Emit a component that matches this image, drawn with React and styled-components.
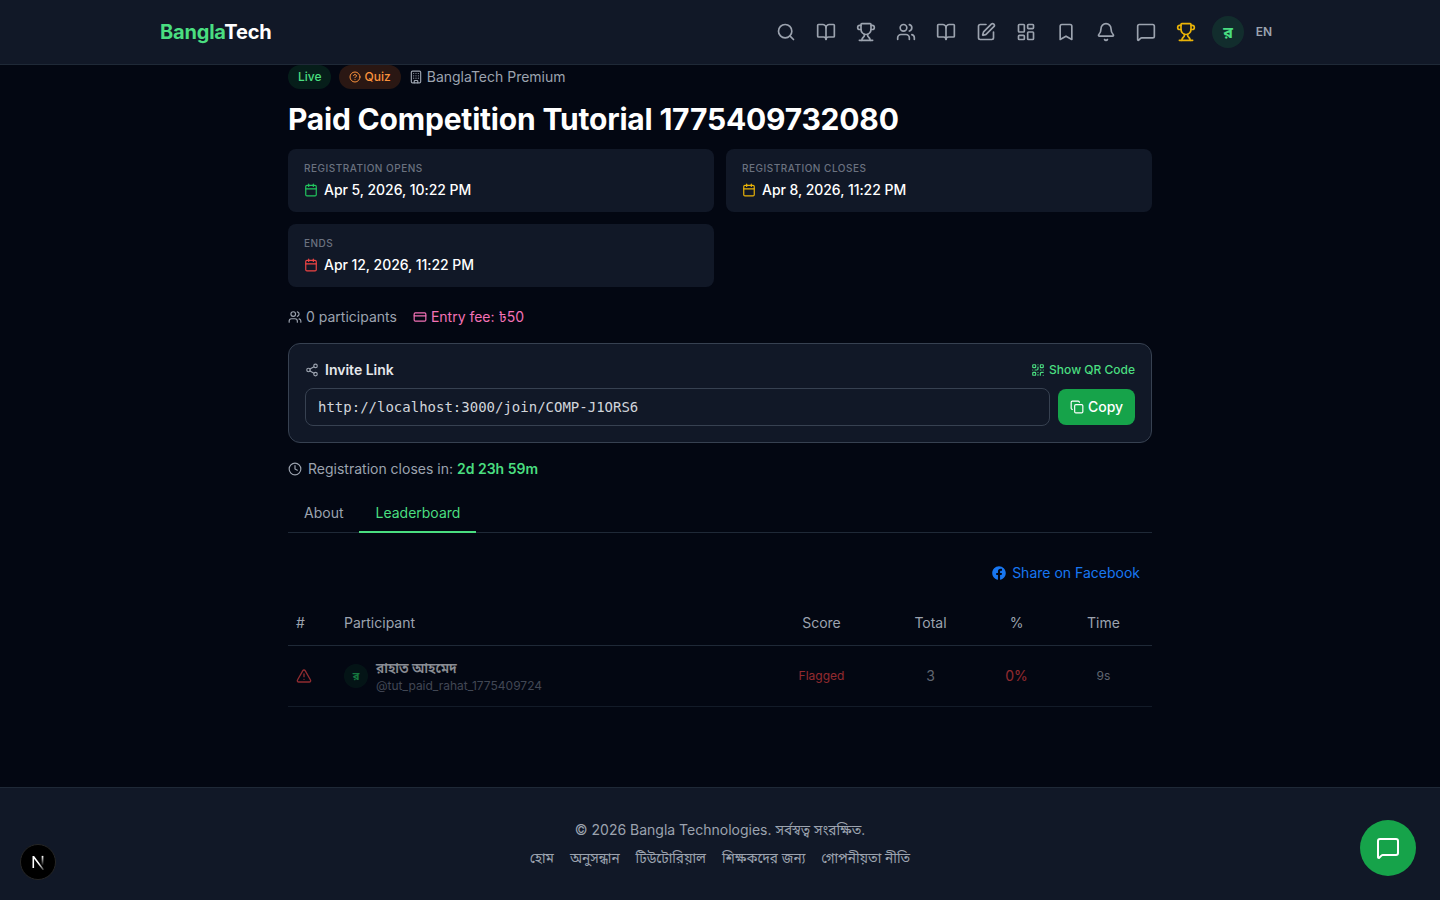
import React from "react";
import styled, { createGlobalStyle } from "styled-components";
import {
  Search, BookOpen, Trophy, Users, SquarePen, LayoutDashboard, Bookmark, Bell, MessageSquare,
  CircleHelp, Building, Calendar, CreditCard, Share2, QrCode, Copy, Clock, TriangleAlert,
} from "lucide-react";
import { FaFacebook } from "react-icons/fa";

const SANS = `Inter, "Noto Sans", "Noto Sans Bengali", sans-serif`;

const Global = createGlobalStyle`
  * { box-sizing: border-box; }
  html, body { margin: 0; padding: 0; background: #030712; }
  body {
    font-family: ${SANS};
    color: #f3f4f6;
    font-size: 14px;
    line-height: 20px;
    -webkit-font-smoothing: antialiased;
  }
`;

const Page = styled.div`
  min-height: 900px;
  display: flex;
  flex-direction: column;
  background: #030712;
`;

const Nav = styled.header`
  height: 65px;
  background: #111827;
  border-bottom: 1px solid #1f2937;
  display: flex;
  justify-content: center;
`;
const NavInner = styled.div`
  width: 1120px;
  display: flex;
  align-items: center;
  justify-content: space-between;
`;
const Logo = styled.div`
  font-size: 20px;
  line-height: 28px;
  font-weight: 700;
  letter-spacing: -0.2px;
  color: #fff;
  span { color: #4ade80; }
`;
const NavIcons = styled.nav`
  display: flex;
  align-items: center;
`;
const NavIcon = styled.div`
  width: 40px;
  height: 40px;
  display: flex;
  align-items: center;
  justify-content: center;
  color: ${(p) => p.$color || "#9ca3af"};
`;
const NavAvatar = styled.div`
  width: 32px;
  height: 32px;
  margin-left: 6px;
  border-radius: 50%;
  background: rgba(34, 197, 94, 0.12);
  color: #4ade80;
  font-size: 16px;
  font-weight: 700;
  display: flex;
  align-items: center;
  justify-content: center;
`;
const Lang = styled.div`
  width: 32px;
  margin-left: 4px;
  text-align: center;
  color: #9ca3af;
  font-size: 12px;
  font-weight: 600;
`;

const Main = styled.main`
  width: 864px;
  margin: 0 auto;
  flex: 1;
  display: flex;
  flex-direction: column;
`;
const BadgeRow = styled.div`
  display: flex;
  align-items: center;
  gap: 8px;
  height: 24px;
`;
const Pill = styled.span`
  display: inline-flex;
  align-items: center;
  gap: 4px;
  height: 24px;
  padding: 0 ${(p) => p.$right || 10}px 0 10px;
  border-radius: 999px;
  font-size: 12px;
  line-height: 16px;
  font-weight: 500;
  color: ${(p) => p.$color};
  background: ${(p) => p.$bg};
`;
const Org = styled.span`
  display: inline-flex;
  align-items: center;
  gap: 4px;
  color: #9ca3af;
`;
const Title = styled.h1`
  margin: 12px 0;
  font-size: 30px;
  line-height: 36px;
  font-weight: 700;
  letter-spacing: -0.2px;
  color: #fff;
`;
const DateGrid = styled.div`
  display: grid;
  grid-template-columns: 1fr 1fr;
  gap: 12px;
`;
const DateCard = styled.div`
  height: 63px;
  padding: 12px 16px;
  background: #111827;
  border-radius: 8px;
`;
const DateLabel = styled.div`
  font-size: 10px;
  line-height: 15px;
  font-weight: 500;
  letter-spacing: 0.5px;
  text-transform: uppercase;
  color: #6b7280;
  margin-bottom: 4px;
`;
const DateValue = styled.div`
  display: flex;
  align-items: center;
  gap: 6px;
  font-weight: 500;
  letter-spacing: -0.05px;
  color: #fff;
  svg { color: ${(p) => p.$color}; }
`;
const Meta = styled.div`
  display: flex;
  align-items: center;
  gap: 16px;
  margin: 20px 0 16px;
`;
const MetaItem = styled.span`
  display: inline-flex;
  align-items: center;
  gap: 4px;
  color: ${(p) => p.$color || "#9ca3af"};
`;
const Invite = styled.section`
  height: 100px;
  padding: 16px;
  background: #111827;
  border: 1px solid #374151;
  border-radius: 12px;
`;
const InviteHead = styled.div`
  display: flex;
  justify-content: space-between;
  align-items: center;
  height: 20px;
  margin-bottom: 8px;
`;
const InviteTitle = styled.div`
  display: flex;
  align-items: center;
  gap: 6px;
  font-weight: 600;
  color: #e5e7eb;
  svg { color: #9ca3af; }
`;
const QrLink = styled.div`
  display: flex;
  align-items: center;
  gap: 4px;
  font-size: 12px;
  font-weight: 500;
  color: #4ade80;
`;
const InviteRow = styled.div`
  display: flex;
  align-items: center;
  gap: 8px;
`;
const LinkField = styled.div`
  flex: 1;
  height: 38px;
  display: flex;
  align-items: center;
  padding: 0 12px;
  border: 1px solid #374151;
  border-radius: 8px;
  background: #111827;
  color: #d1d5db;
  font-family: "DejaVu Sans Mono", monospace;
  font-size: 14px;
`;
const CopyButton = styled.div`
  width: 77px;
  height: 36px;
  border-radius: 8px;
  background: #16a34a;
  color: #fff;
  font-weight: 500;
  display: flex;
  align-items: center;
  justify-content: center;
  gap: 4px;
`;
const Countdown = styled.div`
  display: flex;
  align-items: center;
  gap: 6px;
  margin-top: 16px;
  color: #9ca3af;
  b { font-weight: 600; color: #4ade80; }
`;
const Tabs = styled.div`
  display: flex;
  margin-top: 14px;
  border-bottom: 1px solid #1f2937;
`;
const Tab = styled.div`
  height: 40px;
  padding: 2px 16px 0;
  display: flex;
  align-items: center;
  font-weight: 400;
  margin-bottom: -1px;
  color: ${(p) => (p.$active ? "#4ade80" : "#9ca3af")};
  border-bottom: 2px solid ${(p) => (p.$active ? "#4ade80" : "transparent")};
`;
const ShareRow = styled.div`
  display: flex;
  justify-content: flex-end;
  padding: 30px 12px 18px 0;
`;
const Share = styled.div`
  display: flex;
  align-items: center;
  gap: 6px;
  color: #1877f2;
  font-weight: 400;
`;
const Row = styled.div`
  display: grid;
  grid-template-columns: 48px 1fr 123px 95px 77px 97px;
  align-items: center;
  border-bottom: 1px solid #1f2937;
  height: ${(p) => p.$h}px;
  opacity: ${(p) => (p.$dim ? 0.6 : 1)};
`;
const HeadCell = styled.div`
  color: #9ca3af;
  font-weight: 400;
  text-align: ${(p) => (p.$left ? "left" : "center")};
  padding-left: ${(p) => (p.$pad ? "8px" : "0")};
`;
const Cell = styled.div`
  text-align: center;
  font-size: ${(p) => p.$size || 14}px;
  font-weight: ${(p) => p.$weight || 400};
  color: ${(p) => p.$color};
`;
const FlagCell = styled.div`
  padding-left: 8px;
  display: flex;
  color: #ef4444;
`;
const Person = styled.div`
  display: flex;
  align-items: center;
  gap: 8px;
  padding-left: 8px;
`;
const SmallAvatar = styled.div`
  width: 24px;
  height: 24px;
  border-radius: 50%;
  background: rgba(34, 197, 94, 0.12);
  color: #22c55e;
  font-size: 11px;
  font-weight: 700;
  display: flex;
  align-items: center;
  justify-content: center;
`;
const PersonName = styled.div`
  font-weight: 600;
  color: #e5e7eb;
  line-height: 18px;
`;
const PersonHandle = styled.div`
  margin-top: 1px;
  font-size: 12px;
  line-height: 16px;
  color: #6b7280;
`;
const Bn = styled.span`
  font-size: 0.97em;
`;

const Footer = styled.footer`
  margin-top: 80px;
  height: 113px;
  background: #111827;
  border-top: 1px solid #1f2937;
  padding-top: 32px;
  display: flex;
  flex-direction: column;
  align-items: center;
  gap: 8px;
  color: #9ca3af;
`;
const FooterLinks = styled.div`
  display: flex;
  gap: 16px;
`;
const ChatButton = styled.div`
  position: fixed;
  right: 24px;
  bottom: 24px;
  width: 56px;
  height: 56px;
  border-radius: 50%;
  background: #16a34a;
  color: #fff;
  display: flex;
  align-items: center;
  justify-content: center;
`;
const DevBadge = styled.div`
  position: fixed;
  left: 20px;
  bottom: 20px;
  width: 36px;
  height: 36px;
  border-radius: 50%;
  background: #000;
  border: 1px solid #262626;
  display: flex;
  align-items: center;
  justify-content: center;
`;

const navIcons = [Search, BookOpen, Trophy, Users, BookOpen, SquarePen, LayoutDashboard, Bookmark, Bell, MessageSquare];

export default function App() {
  return (
    <Page>
      <Global />
      <Nav>
        <NavInner>
          <Logo><span>Bangla</span>Tech</Logo>
          <NavIcons>
            {navIcons.map((I, i) => (
              <NavIcon key={i}><I size={20} strokeWidth={2} /></NavIcon>
            ))}
            <NavIcon $color="#eab308"><Trophy size={20} /></NavIcon>
            <NavAvatar>র</NavAvatar>
            <Lang>EN</Lang>
          </NavIcons>
        </NavInner>
      </Nav>
      <Main>
        <BadgeRow>
          <Pill $right={9} $color="#4ade80" $bg="rgba(34,197,94,0.12)">Live</Pill>
          <Pill $color="#fb923c" $bg="rgba(249,115,22,0.16)"><CircleHelp size={12} />Quiz</Pill>
          <Org><Building size={14} />BanglaTech Premium</Org>
        </BadgeRow>
        <Title>Paid Competition Tutorial 1775409732080</Title>
        <DateGrid>
          <DateCard>
            <DateLabel>Registration Opens</DateLabel>
            <DateValue $color="#22c55e"><Calendar size={14} />Apr 5, 2026, 10:22 PM</DateValue>
          </DateCard>
          <DateCard>
            <DateLabel>Registration Closes</DateLabel>
            <DateValue $color="#eab308"><Calendar size={14} />Apr 8, 2026, 11:22 PM</DateValue>
          </DateCard>
          <DateCard>
            <DateLabel>Ends</DateLabel>
            <DateValue $color="#ef4444"><Calendar size={14} />Apr 12, 2026, 11:22 PM</DateValue>
          </DateCard>
        </DateGrid>
        <Meta>
          <MetaItem><Users size={14} />0 participants</MetaItem>
          <MetaItem $color="#f472b6"><CreditCard size={14} />Entry fee: ৳50</MetaItem>
        </Meta>
        <Invite>
          <InviteHead>
            <InviteTitle><Share2 size={14} />Invite Link</InviteTitle>
            <QrLink><QrCode size={14} />Show QR Code</QrLink>
          </InviteHead>
          <InviteRow>
            <LinkField>http://localhost:3000/join/COMP-J1ORS6</LinkField>
            <CopyButton><Copy size={14} />Copy</CopyButton>
          </InviteRow>
        </Invite>
        <Countdown><Clock size={14} /><span>Registration closes in: <b>2d 23h 59m</b></span></Countdown>
        <Tabs>
          <Tab>About</Tab>
          <Tab $active>Leaderboard</Tab>
        </Tabs>
        <ShareRow>
          <Share><FaFacebook size={14} />Share on Facebook</Share>
        </ShareRow>
        <Row $h={45}>
          <HeadCell $left $pad>#</HeadCell>
          <HeadCell $left $pad>Participant</HeadCell>
          <HeadCell>Score</HeadCell>
          <HeadCell>Total</HeadCell>
          <HeadCell>%</HeadCell>
          <HeadCell>Time</HeadCell>
        </Row>
        <Row $h={61} $dim>
          <FlagCell><TriangleAlert size={16} /></FlagCell>
          <Person>
            <SmallAvatar>র</SmallAvatar>
            <div>
              <PersonName><Bn>রাহাত আহমেদ</Bn></PersonName>
              <PersonHandle>@tut_paid_rahat_1775409724</PersonHandle>
            </div>
          </Person>
          <Cell $size={12} $color="#ef4444">Flagged</Cell>
          <Cell $color="#9ca3af">3</Cell>
          <Cell $color="#ef4444">0%</Cell>
          <Cell $size={12} $color="#9ca3af">9s</Cell>
        </Row>
      </Main>
      <Footer>
        <div>© 2026 Bangla Technologies. <Bn>সর্বস্বত্ব সংরক্ষিত.</Bn></div>
        <FooterLinks>
          <Bn>হোম</Bn>
          <Bn>অনুসন্ধান</Bn>
          <Bn>টিউটোরিয়াল</Bn>
          <Bn>শিক্ষকদের জন্য</Bn>
          <Bn>গোপনীয়তা নীতি</Bn>
        </FooterLinks>
      </Footer>
      <DevBadge>
        <svg width="22" height="22" viewBox="0 0 18 18" fill="none">
          <defs>
            <linearGradient id="nDiag" x1="0" y1="0" x2="1" y2="1">
              <stop offset="0.55" stopColor="#fff" />
              <stop offset="1" stopColor="#fff" stopOpacity="0.2" />
            </linearGradient>
            <linearGradient id="nStem" x1="0" y1="0" x2="0" y2="1">
              <stop offset="0" stopColor="#fff" />
              <stop offset="1" stopColor="#fff" stopOpacity="0" />
            </linearGradient>
          </defs>
          <path d="M4.5 14V4H5.8L14 15.2L12.8 15.6L5.8 6.4V14Z" fill="url(#nDiag)" />
          <rect x="12" y="4" width="1.4" height="8" fill="url(#nStem)" />
        </svg>
      </DevBadge>
      <ChatButton><MessageSquare size={24} /></ChatButton>
    </Page>
  );
}
